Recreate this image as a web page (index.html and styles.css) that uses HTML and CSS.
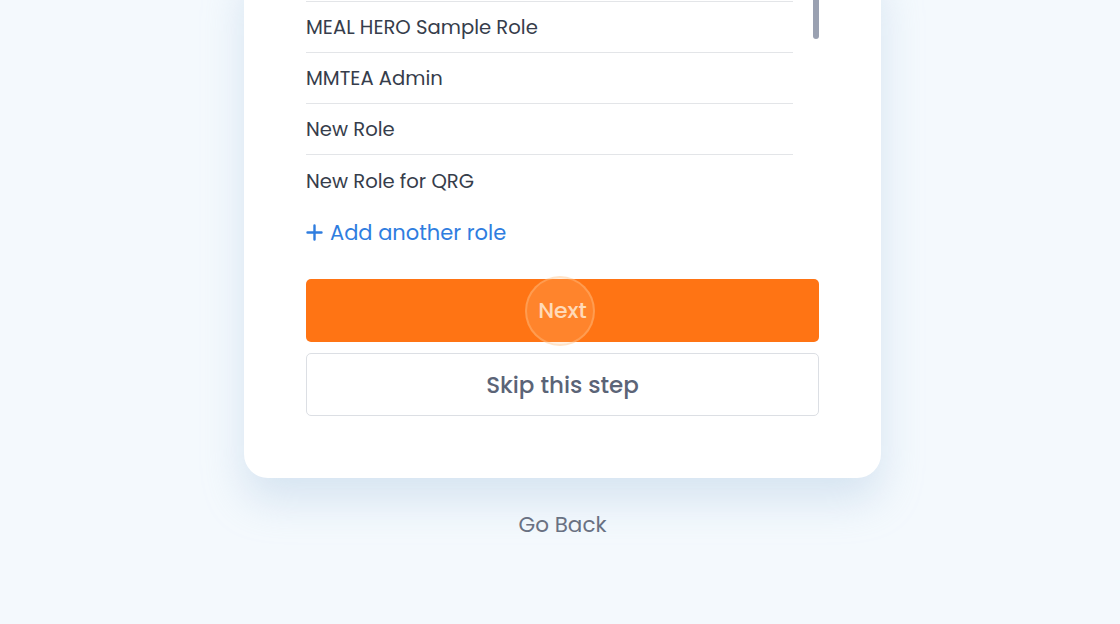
FILE: index.html
```html
<!DOCTYPE html>
<html lang="en">
<head>
    <meta charset="UTF-8">
    <meta name="viewport" content="width=device-width, initial-scale=1.0">
    <title>Assign Roles</title>
    <link rel="stylesheet" href="styles.css">
</head>
<body>
    <div class="page">
        <div class="card">
            <div class="roles">
                <ul class="role-list">
                    <li>MEAL HERO Sample Role</li>
                    <li>MMTEA Admin</li>
                    <li>New Role</li>
                    <li>New Role for QRG</li>
                </ul>
                <div class="scroll-track">
                    <div class="scroll-thumb"></div>
                </div>
            </div>

            <a class="add-role" href="#">
                <svg width="17" height="17" viewBox="0 0 17 17" aria-hidden="true">
                    <path d="M8.5 1.5v14M1.5 8.5h14" stroke="currentColor" stroke-width="2.4" stroke-linecap="round"/>
                </svg>
                Add another role
            </a>

            <button class="btn btn-primary" type="button">
                Next
                <span class="click-ring"></span>
            </button>
            <button class="btn btn-secondary" type="button">Skip this step</button>
        </div>

        <a class="go-back" href="#">Go Back</a>
    </div>
</body>
</html>
```

FILE: styles.css
```css
* {
    margin: 0;
    padding: 0;
    box-sizing: border-box;
}

body {
    font-family: 'Poppins', 'Open Sans', 'Noto Sans', sans-serif;
    background: #f4f9fd;
    height: 100vh;
    overflow: hidden;
}

.page {
    display: flex;
    flex-direction: column;
    align-items: center;
    padding-left: 5px;
}

.card {
    width: 637px;
    margin-top: -41px;
    padding: 42px 62px 62px;
    background: white;
    border-radius: 24px;
    box-shadow: 0 22px 40px rgba(170, 198, 226, 0.4);
    display: flex;
    flex-direction: column;
}

.roles {
    display: flex;
    gap: 20px;
}

.role-list {
    list-style: none;
    flex: 1;
    border-top: 1px solid #e3e5e8;
}

.role-list li {
    height: 51px;
    display: flex;
    align-items: center;
    font-size: 19.6px;
    color: #363d4b;
    border-bottom: 1px solid #e3e5e8;
}

.role-list li:last-child {
    border-bottom: none;
}

.scroll-track {
    width: 6px;
    margin-top: -42px;
}

.scroll-thumb {
    height: 80px;
    background: #9aa1b1;
    border-radius: 3px;
}

.add-role {
    display: flex;
    align-items: center;
    gap: 7px;
    height: 52px;
    font-size: 21px;
    color: #2f7ddf;
    text-decoration: none;
}

.btn {
    width: 513px;
    height: 63px;
    border-radius: 5px;
    font-family: inherit;
    font-weight: 500;
    cursor: pointer;
}

.btn-primary {
    position: relative;
    margin-top: 21px;
    background: #ff7414;
    border: none;
    color: #ffe2c8;
    font-size: 22px;
}

.click-ring {
    position: absolute;
    left: 219px;
    top: -3px;
    width: 70px;
    height: 70px;
    border-radius: 50%;
    background: rgba(255, 190, 130, 0.22);
    border: 2px solid rgba(255, 200, 150, 0.35);
}

.btn-secondary {
    margin-top: 11px;
    background: white;
    border: 1px solid #dcdfe4;
    color: #5b6477;
    font-size: 23px;
}

.go-back {
    margin-top: 30px;
    font-size: 21.5px;
    color: #697182;
    text-decoration: none;
}
```
